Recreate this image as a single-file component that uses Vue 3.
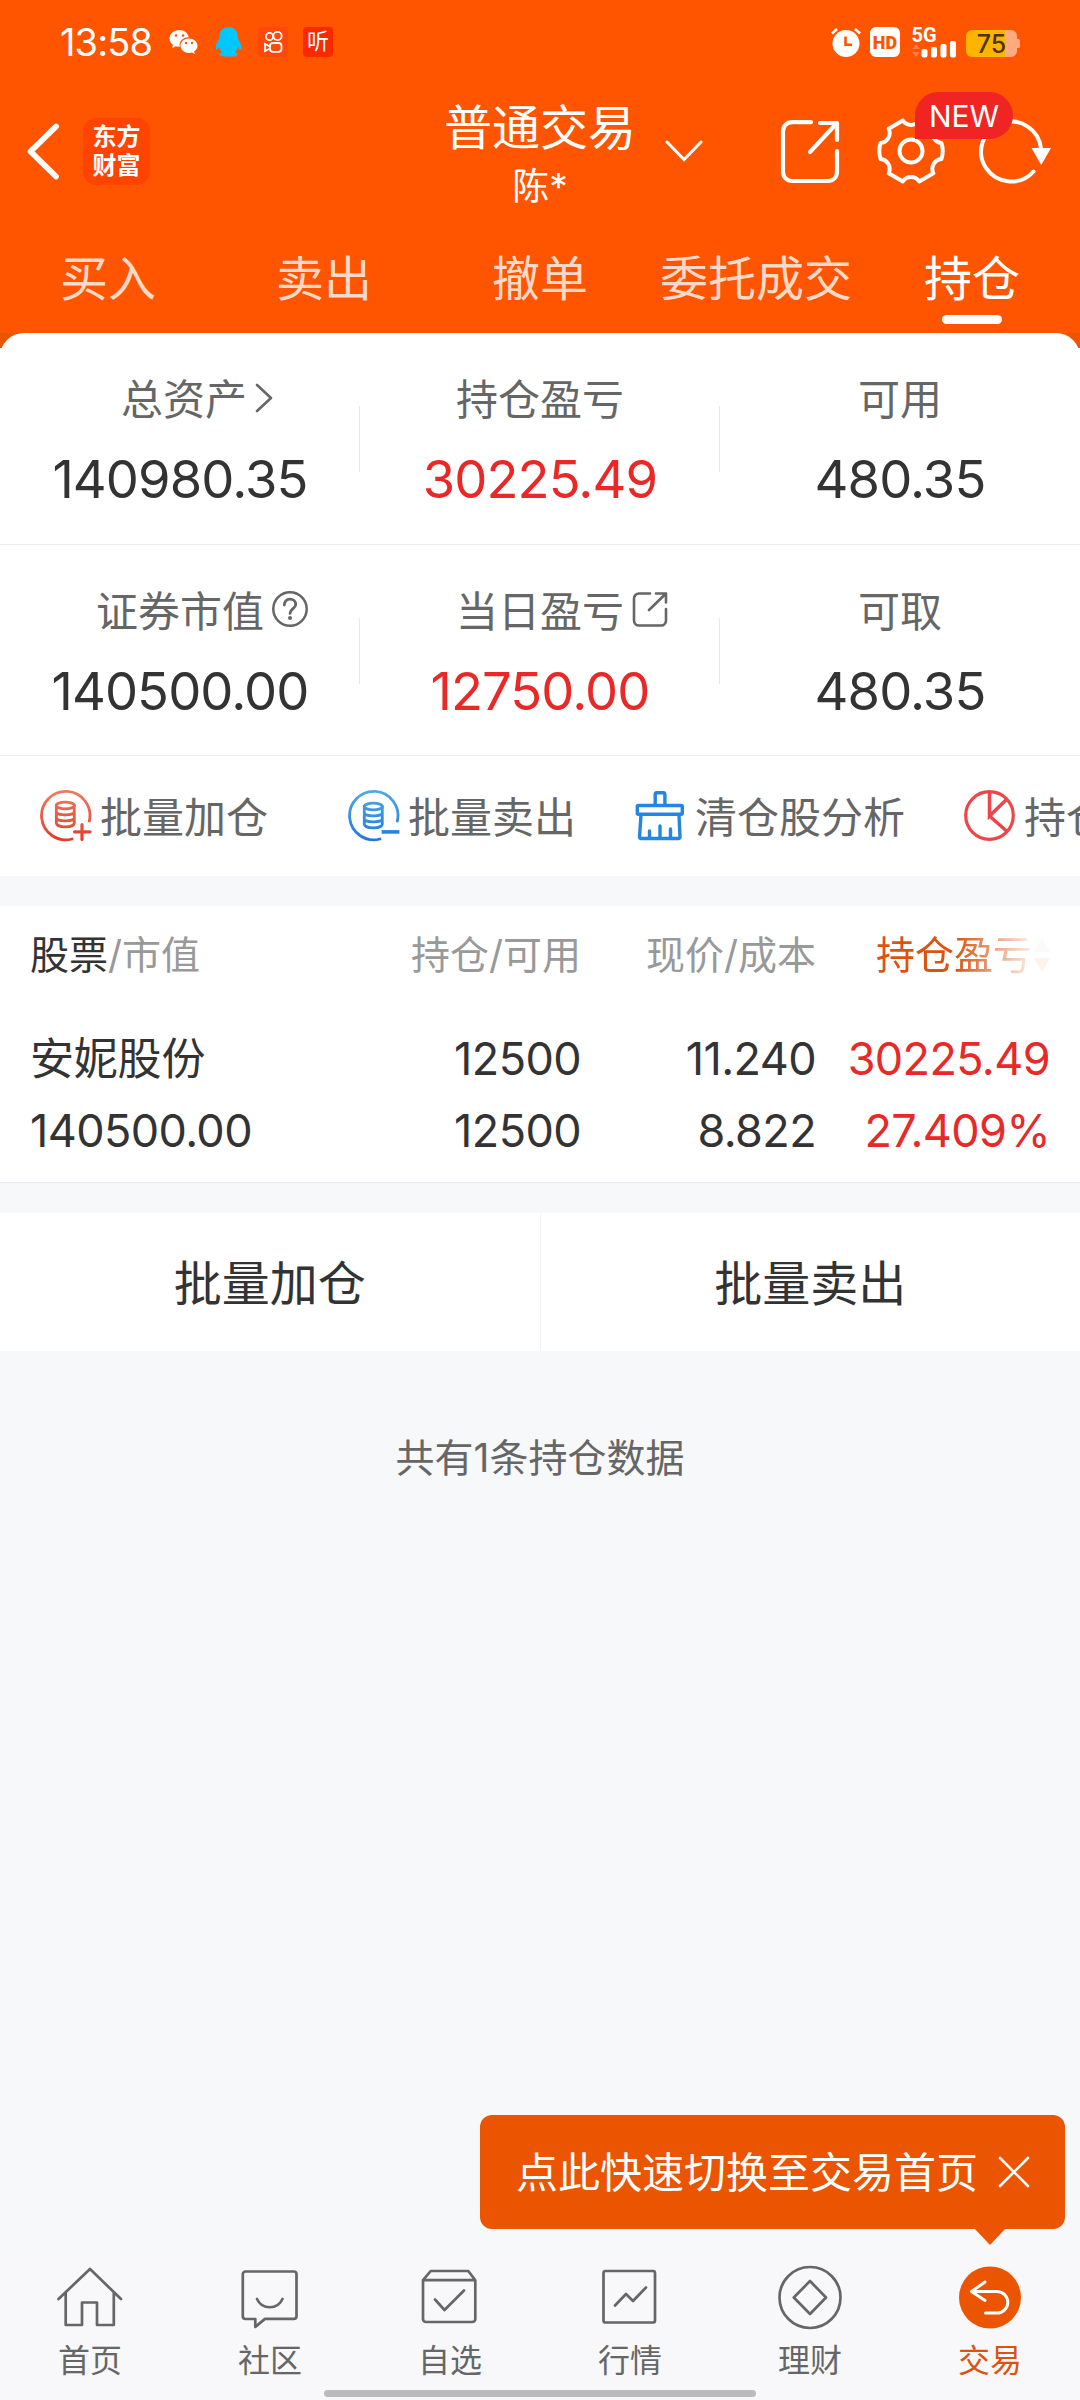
<script setup>
const tabs = ['买入', '卖出', '撤单', '委托成交', '持仓']
const activeTab = '持仓'

const summary = [
  [
    { label: '总资产', value: '140980.35', icon: 'chevron' },
    { label: '持仓盈亏', value: '30225.49', up: true },
    { label: '可用', value: '480.35' },
  ],
  [
    { label: '证券市值', value: '140500.00', icon: 'help' },
    { label: '当日盈亏', value: '12750.00', up: true, icon: 'open' },
    { label: '可取', value: '480.35' },
  ],
]

const holdings = [
  {
    name: '安妮股份', marketValue: '140500.00',
    amount: '12500', usable: '12500',
    price: '11.240', cost: '8.822',
    profit: '30225.49', ratio: '27.409%',
  },
]

const nav = [
  { key: 'home', label: '首页' },
  { key: 'chat', label: '社区' },
  { key: 'pick', label: '自选' },
  { key: 'quote', label: '行情' },
  { key: 'wealth', label: '理财' },
  { key: 'trade', label: '交易' },
]
</script>

<template>
  <div class="page">
    <header class="header">
      <div class="status">
        <span class="time">13:58</span>
        <svg class="wechat" width="29" height="26" viewBox="0 0 29 26">
          <path fill="#fff" d="M10.5 1C4.900 1 .5 4.700.5 9.400c0 2.600 1.400 4.900 3.500 6.400L3.200 19l3.600-1.800c1.300.4 2.500.6 4 .6-1.400-5.400 3.200-9.700 9-9.600C18.900 4 15 1 10.500 1z" />
          <path fill="#fff" d="M20 9.500c-4.700 0-8.500 3.200-8.500 7.200s3.800 7.200 8.500 7.200c1 0 2-.1 2.900-.4l3 1.600-.8-2.700c2.100-1.400 3.400-3.400 3.400-5.700 0-4-3.800-7.200-8.500-7.200z" />
          <g fill="#f50"><circle cx="7" cy="6.500" r="1.300" /><circle cx="14" cy="6.500" r="1.300" /><circle cx="17" cy="14" r="1.200" /><circle cx="23" cy="14" r="1.200" /></g>
        </svg>
        <svg class="qq" width="27" height="30" viewBox="0 0 27 30">
          <path fill="#00c8ff" d="M13.500 0C8 0 4.500 4 4.500 9.200c0 1-.2 2.100-.7 3C2 15 .6 18 .6 20.500c0 1.700.5 2.400 1 2.200.8-.3 1.700-1.700 2.300-2.800.5 2.200 1.700 4 3.200 5.300-1.700.6-2.800 1.400-2.800 2.400 0 1.400 3.500 2 9.200 2s9.200-.6 9.200-2c0-1-1.100-1.800-2.800-2.400 1.500-1.300 2.700-3.100 3.200-5.300.6 1.100 1.500 2.500 2.300 2.800.5.2 1-.5 1-2.200 0-2.500-1.400-5.500-3.200-8.300-.5-.9-.7-2-.7-3C22.500 4 19 0 13.500 0z" />
        </svg>
        <svg class="kuai" width="30" height="30" viewBox="0 0 30 30">
          <rect width="30" height="30" rx="3" fill="#ff480a" />
          <g fill="none" stroke="#fff" stroke-width="1.800">
            <circle cx="11.500" cy="9.500" r="3.600" /><circle cx="19.500" cy="9" r="4.200" />
            <rect x="12" y="16" width="11.500" height="8.800" rx="3" /><path d="M12 19.500 7 17v7l5-2.500" />
          </g>
        </svg>
        <span class="ting">听</span>

        <svg class="alarm" width="30" height="31" viewBox="0 0 30 31">
          <circle cx="15" cy="16.500" r="13.500" fill="#fff" />
          <path d="M1 6.500 6 2M29 6.500 24 2" stroke="#fff" stroke-width="2.600" />
          <path d="M14.500 9.500v8.200h6.500" fill="none" stroke="#f50" stroke-width="2.600" />
        </svg>
        <span class="hd">HD</span>
        <svg class="signal" width="45" height="31" viewBox="0 0 45 31">
          <text x="-.5" y="15" class="sig-text">5G</text>
          <path fill="#ff7c45" d="M0 22 4 17l4 5zM0 25h8l-4 5z" />
          <g fill="#fff">
            <rect x="9.500" y="22" width="6" height="8.500" rx="2" /><rect x="19" y="20" width="6" height="10.500" rx="2" />
            <rect x="28.500" y="17" width="6" height="13.500" rx="2" /><rect x="38" y="14" width="6" height="16.500" rx="2" />
          </g>
        </svg>
        <svg class="battery" width="55" height="27" viewBox="0 0 55 27">
          <path d="M39 0h6a6 6 0 0 1 6 6v3h1.500a1.500 1.500 0 0 1 1.500 1.500v6a1.500 1.500 0 0 1-1.500 1.500H51v3a6 6 0 0 1-6 6h-6z" fill="#ffaa80" />
          <path d="M39 0H6a6 6 0 0 0-6 6v15a6 6 0 0 0 6 6h33z" fill="#ffb400" />
          <text x="25.500" y="22.500" text-anchor="middle" class="bat-text">75</text>
        </svg>
      </div>

      <div class="titlebar">
        <div class="side">
          <svg class="back" width="36" height="60" viewBox="0 0 36 60"><path d="M31 5.500 5.500 30.500 31 55.500" fill="none" stroke="#fff" stroke-width="5.800" stroke-linecap="round" stroke-linejoin="round" /></svg>
          <div class="logo"><span>东方</span><span>财富</span></div>
        </div>
        <div class="title">
          <div class="title-main">普通交易</div>
          <div class="title-sub">陈*</div>
        </div>
        <div class="side tools">
          <svg class="down" width="38" height="22" viewBox="0 0 38 22"><path d="M2 2 19 19.500 36 2" fill="none" stroke="#fff" stroke-width="3" stroke-linecap="round" /></svg>
          <svg class="share" width="60" height="66" viewBox="0 0 60 66">
            <g fill="none" stroke="#fff" stroke-width="4.200" stroke-linecap="round" stroke-linejoin="round">
              <path d="M31 3.200H12a9 9 0 0 0-9 9V53a9 9 0 0 0 9 9h36a9 9 0 0 0 9-9V32" /><path d="M40 4H57v17M57 4 30 33" />
            </g>
          </svg>
          <div class="gear">
            <svg width="70" height="70" viewBox="-35 -35 70 70">
              <g fill="none" stroke="#fff" stroke-width="4" stroke-linejoin="round">
                <path d="M30.400-8.100A9 16 0 0 1 30.400 8.100A10 10 0 0 0 22.300 22.300L8.200 30.400A10 10 0 0 0-8.200 30.400L-22.300 22.300A10 10 0 0 0-30.400 8.100A9 16 0 0 1-30.400-8.100A10 10 0 0 0-22.300-22.300L-8.200-30.400A10 10 0 0 0 8.200-30.400L22.300-22.300A10 10 0 0 0 30.400-8.100Z" />
                <circle r="11.500" />
              </g>
            </svg>
            <span class="badge">NEW</span>
          </div>
          <svg class="refresh" width="74" height="66" viewBox="0 0 74 66">
            <path d="M55.500 53.500A30 30 0 1 1 63 31" fill="none" stroke="#fff" stroke-width="4" stroke-linecap="round" />
            <path d="M53.500 30h19.500L63.200 47z" fill="#fff" />
          </svg>
        </div>
      </div>

      <nav class="tabs">
        <div v-for="t in tabs" :key="t" class="tab" :class="{ active: t === activeTab }"><span>{{ t }}</span></div>
      </nav>
    </header>

    <section class="summary">
      <div v-for="(row, i) in summary" :key="i" class="sum-row">
        <div v-for="cell in row" :key="cell.label" class="cell">
          <div class="cell-label" :class="cell.icon">
            {{ cell.label }}
            <svg v-if="cell.icon === 'chevron'" class="mark" width="18" height="30" viewBox="0 0 18 30"><path d="M2 2 16 15 2 28" fill="none" stroke="#666" stroke-width="2.600" stroke-linecap="round" stroke-linejoin="round" /></svg>
            <svg v-if="cell.icon === 'help'" class="mark" width="36" height="36" viewBox="0 0 36 36">
              <circle cx="18" cy="18" r="16.700" fill="none" stroke="#666" stroke-width="2.500" />
              <path d="M12.300 14c0-3.600 2.500-5.800 5.700-5.800s5.700 2.100 5.700 5.200c0 4.200-5.700 4.300-5.700 9" fill="none" stroke="#666" stroke-width="2.800" stroke-linecap="round" /><circle cx="18" cy="27" r="2" fill="#666" />
            </svg>
            <svg v-if="cell.icon === 'open'" class="mark" width="36" height="36" viewBox="0 0 36 36">
              <g fill="none" stroke="#666" stroke-width="2.600" stroke-linecap="round" stroke-linejoin="round"><path d="M18 2.500H7a5 5 0 0 0-5 5v22a5 5 0 0 0 5 5h22a5 5 0 0 0 5-5V18" /><path d="M24 2.500h10v9M34 2.500 17 19" /></g>
            </svg>
          </div>
          <div class="cell-value" :class="{ up: cell.up }">{{ cell.value }}</div>
        </div>
      </div>
    </section>

    <section class="actions">
      <div class="action first">
        <svg width="52" height="52" viewBox="0 0 52 52">
          <defs><linearGradient id="gr" gradientUnits="userSpaceOnUse" x1="0" y1="0" x2="0" y2="51"><stop offset="0" stop-color="#ee7c62" /><stop offset="1" stop-color="#e63b2b" /></linearGradient></defs>
          <g fill="none" stroke="url(#gr)" stroke-width="2.800" stroke-linecap="round">
            <path d="M49.300 31.200A24.200 24.200 0 1 0 32 49" />
            <ellipse cx="25.300" cy="15.500" rx="9" ry="3.400" />
            <path d="M16.300 15.500V33c0 5.200 18 5.200 18 0V15.500M16.300 21.500c0 4.600 18 4.600 18 0M16.300 27.500c0 4.600 18 4.600 18 0" />
            <path d="M34.500 41.800h15.500M42 34.500v15" stroke-width="3.200" />
          </g>
        </svg><span>批量加仓</span>
      </div>
      <div class="action">
        <svg width="52" height="52" viewBox="0 0 52 52">
          <defs><linearGradient id="gb" gradientUnits="userSpaceOnUse" x1="0" y1="0" x2="0" y2="51"><stop offset="0" stop-color="#4fabe4" /><stop offset="1" stop-color="#2377da" /></linearGradient></defs>
          <g fill="none" stroke="url(#gb)" stroke-width="2.800" stroke-linecap="round">
            <path d="M49.300 31.200A24.200 24.200 0 1 0 32 49" />
            <ellipse cx="25.300" cy="16.500" rx="9" ry="3.400" />
            <path d="M16.300 16.500V34c0 5.200 18 5.200 18 0V16.500M16.300 22.500c0 4.600 18 4.600 18 0M16.300 28.500c0 4.600 18 4.600 18 0" />
            <path d="M35 41.500h15v.8h-15z" />
          </g>
        </svg><span>批量卖出</span>
      </div>
      <div class="action">
        <svg width="52" height="52" viewBox="0 0 52 52">
          <g fill="none" stroke="#2585e0" stroke-width="3.400" stroke-linecap="round" stroke-linejoin="round">
            <path d="M20.200 15V4.500a1.700 1.700 0 0 1 1.700-1.700h6.300a1.700 1.700 0 0 1 1.700 1.700V15" /><rect x="2.300" y="15.500" width="45" height="8.700" rx="1" />
            <path d="M6 25 4.500 47a1.500 1.500 0 0 0 1.500 1.500h37.500a1.500 1.500 0 0 0 1.500-1.500L44 25M14.500 41v7M25 36v12M35.500 39v9" />
          </g>
        </svg><span>清仓股分析</span>
      </div>
      <div class="action">
        <svg width="52" height="52" viewBox="0 0 52 52">
          <g fill="none" stroke="#ee4648" stroke-width="3.200"><circle cx="25.500" cy="25.500" r="23.800" /><path d="M25.500 2v24L42.500 9.500M25.500 26 42.500 41" stroke-width="3.500" /></g>
        </svg><span>持仓</span>
      </div>
    </section>

    <section class="table">
      <div class="grid thead">
        <div><b>股票</b>/市值</div>
        <div>持仓/可用</div>
        <div>现价/成本</div>
        <div class="sorted">持仓盈亏<svg width="16" height="36" viewBox="0 0 16 36"><path d="M0 15 8 1l8 14z" fill="#bbb" /><path d="M0 21h16L8 35z" fill="#f50" /></svg></div>
      </div>
      <div v-for="h in holdings" :key="h.name" class="stock">
        <div class="grid line">
          <div class="name">{{ h.name }}</div><div>{{ h.amount }}</div><div>{{ h.price }}</div><div class="up">{{ h.profit }}</div>
        </div>
        <div class="grid line">
          <div>{{ h.marketValue }}</div><div>{{ h.usable }}</div><div>{{ h.cost }}</div><div class="up">{{ h.ratio }}</div>
        </div>
      </div>
    </section>

    <section class="batch">
      <button>批量加仓</button>
      <button>批量卖出</button>
    </section>

    <p class="count">共有1条持仓数据</p>

    <footer class="footer">
      <div class="tip">
        <span>点此快速切换至交易首页</span>
        <svg width="32" height="32" viewBox="0 0 32 32"><path d="M2 2 30 30M30 2 2 30" stroke="#fff" stroke-width="2.600" stroke-linecap="round" /></svg>
      </div>
      <nav class="nav">
        <div v-for="n in nav" :key="n.key" class="nav-item" :class="{ on: n.key === 'trade' }">
          <svg width="72" height="72" viewBox="0 0 72 72">
            <g fill="none" stroke="#666" stroke-width="2.700" stroke-linecap="round" stroke-linejoin="round">
              <path v-if="n.key === 'home'" d="M4.500 37 36 7 67 37M11.700 31v32H28V40.500H43V63H59.800V31" />
              <template v-else-if="n.key === 'chat'">
                <path d="M11.500 9.500h48.300a2.700 2.700 0 0 1 2.700 2.700v42a2.700 2.700 0 0 1-2.700 2.700H31l-9.700 8V57h-9.800a2.700 2.700 0 0 1-2.700-2.700v-42a2.700 2.700 0 0 1 2.700-2.800z" /><path d="M23 37c5 11 20.500 11 25.500 0" />
              </template>
              <path v-else-if="n.key === 'pick'" d="M9 18.200 16.700 9h37.600l7 9.200V57a3 3 0 0 1-3 3H12a3 3 0 0 1-3-3V18.200H61M21 37.500 30.500 48 50 28.500" />
              <template v-else-if="n.key === 'quote'"><rect x="9.500" y="9" width="51.500" height="51.500" rx="2" /><path d="M21 43.500 32 32l7 7L52 25.500" /></template>
              <template v-else-if="n.key === 'wealth'"><circle cx="36" cy="35.500" r="30.500" /><path d="M36 19 52 35.500 36 52 19.800 35.500z" /></template>
              <template v-else><circle cx="36" cy="35.500" r="31" fill="#eb5502" stroke="none" /><path stroke="#fff" stroke-width="3" d="M31 20 17.500 29.500 31 38.500M18 29.500H43a10.800 10.800 0 0 1 0 21.600H31.500" /></template>
            </g>
          </svg>
          <span>{{ n.label }}</span>
        </div>
      </nav>
      <div class="homebar"></div>
    </footer>
  </div>
</template>

<style>
body { margin: 0; background: #f7f8fa; }
</style>

<style scoped>
.page {
  width: 1080px; height: 2400px; display: flex; flex-direction: column; overflow: hidden;
  background: #f7f8fa; color: #333; font-family: Inter, "Noto Sans CJK SC", sans-serif; font-size: 42px;
}
.header { height: 333px; flex: none; background: #ff5500; color: #fff; display: flex; flex-direction: column; }
.status { height: 84px; display: flex; align-items: center; padding-left: 60px; box-sizing: border-box; }
.time { width: 109px; font-size: 38px; font-weight: 400; letter-spacing: -.9px; white-space: nowrap; }
.qq { margin-left: 17px; }
.kuai { margin-left: 16px; }
.ting { margin-left: 15px; width: 30px; height: 30px; border-radius: 4px; background: #f92a00; font-size: 22px; line-height: 29px; text-align: center; }
.alarm { margin-left: 498px; }
.hd { margin-left: 9px; width: 30px; height: 30px; border-radius: 6px; background: #fff; color: #ff5500; font: 900 18px/31px Roboto, sans-serif; text-align: center; }
.signal { margin-left: 12px; overflow: visible; }
.battery { margin-left: 9px; margin-top: 3px; }
.sig-text { font: 700 20px Roboto, sans-serif; fill: #fff; }
.bat-text { font: 500 25px Inter, sans-serif; fill: #4d3500; }

.titlebar { height: 139px; display: flex; }
.side { width: 420px; display: flex; align-items: flex-start; }
.back { margin: 37px 0 0 25px; }
.logo { margin: 34px 0 0 22px; width: 67px; height: 67px; border-radius: 13px; background: #ff4400; display: flex; flex-direction: column; align-items: center; justify-content: center; font-size: 24px; line-height: 29px; font-weight: 700; padding-bottom: 2px; box-sizing: border-box; }
.title { width: 240px; text-align: center; }
.title-main { font-size: 48px; line-height: 60px; padding-top: 14px; }
.title-sub { font-size: 37px; line-height: 50px; padding-top: 4px; }
.down { margin: 56px 0 0 5px; }
.share { margin: 35px 0 0 77px; }
.gear { position: relative; margin: 32px 0 0 36px; width: 70px; height: 70px; }
.badge { position: absolute; left: 39px; top: -24px; width: 98px; height: 47px; border-radius: 24px 24px 24px 0; background: #f12424; font-size: 30px; line-height: 49px; text-align: center; z-index: 1; }
.refresh { margin: 34px 0 0 32px; }

.tabs { display: flex; height: 110px; }
.tab { width: 216px; display: flex; flex-direction: column; align-items: center; font-size: 48px; line-height: 60px; padding-top: 26px; box-sizing: border-box; color: #ffd9c8; white-space: nowrap; }
.tab.active { color: #fff; }
.tab.active::after { content: ''; width: 60px; height: 9px; border-radius: 5px; background: #fff; margin-top: 6px; }

.summary { flex: none; background: #fff; position: relative; }
.summary::before { content: ''; position: absolute; left: 0; right: 0; top: 0; height: 15px; background: #e95500; }
.sum-row { position: relative; z-index: 1; height: 210px; border-bottom: 1px solid #ececec; display: flex; background: #fff; }
.sum-row:first-child { height: 211px; border-radius: 24px 24px 0 0; }
.cell { position: relative; width: 360px; display: flex; flex-direction: column; align-items: center; }
.cell:not(:last-child)::after { content: ''; position: absolute; right: 0; top: 73px; width: 1px; height: 66px; background: #e8e8e8; }
.cell-label { position: relative; margin-top: 37px; line-height: 60px; color: #666; }
.cell-label.chevron { left: 4px; }
.mark { position: absolute; left: 100%; top: 9px; margin-left: 8px; }
.chevron .mark { top: 13px; }
.cell-value { margin-top: 17px; line-height: 64px; font-size: 52.500px; letter-spacing: -.9px; }
.up { color: #e92828; }

.actions { flex: none; height: 120px; background: #fff; display: flex; align-items: center; padding-left: 40px; overflow: hidden; color: #666; }
.action { flex: none; display: flex; align-items: center; gap: 8px; margin-right: 59px; white-space: nowrap; line-height: 60px; }
.action span { padding-top: 4px; }
.action.first { margin-right: 80px; }

.table { flex: none; margin-top: 30px; height: 276px; background: #fff; border-bottom: 1px solid #e9ebee; }
.grid { display: grid; grid-template-columns: 351px 200px 235px 234px; padding-left: 30px; }
.grid > div { text-align: right; white-space: nowrap; }
.grid > div:first-child { text-align: left; }
.thead { font-size: 39px; line-height: 60px; padding-top: 19px; color: #999; }
.thead b { font-weight: 400; color: #333; }
.thead .sorted { display: flex; justify-content: flex-end; align-items: center; gap: 2px; color: #da5410; -webkit-mask-image: linear-gradient(90deg, #000 60%, rgba(0, 0, 0, .08) 93%); mask-image: linear-gradient(90deg, #000 60%, rgba(0, 0, 0, .08) 93%); }
.stock { padding-top: 38px; }
.line { font-size: 45px; line-height: 72px; letter-spacing: -.6px; }
.name { font-size: 44px; letter-spacing: -.2px; }

.batch { flex: none; margin-top: 30px; height: 138px; background: #fff; display: flex; }
.batch button { flex: 1; border: 0; background: none; font: inherit; font-size: 48px; color: #333; padding: 0 0 4px; }
.batch button:first-child { border-right: 1px solid #f3f4f6; }
.count { margin: 77px 0 0; text-align: center; font-size: 39px; line-height: 60px; color: #666; }

.footer { margin-top: auto; display: flex; flex-direction: column; background: #f8f8fb; height: 154px; position: relative; }
.tip { position: absolute; left: 480px; top: -131px; width: 585px; height: 114px; box-sizing: border-box; padding-left: 36px; border-radius: 12px; background: #eb5502; color: #fff; display: flex; align-items: center; gap: 20px; white-space: nowrap; }
.tip span { padding-bottom: 6px; }
.tip::after { content: ''; position: absolute; left: 494px; top: 113px; border: 16px solid transparent; border-top: 17px solid #eb5502; border-bottom: 0; }
.nav { display: flex; padding-top: 16px; }
.nav-item { width: 180px; display: flex; flex-direction: column; align-items: center; font-size: 32px; line-height: 44px; color: #666; }
.nav-item span { margin-top: 5px; }
.nav-item.on { color: #dd5210; }
.homebar { position: absolute; left: 324px; top: 144px; width: 432px; height: 7px; border-radius: 4px; background: #bbb; }
</style>
